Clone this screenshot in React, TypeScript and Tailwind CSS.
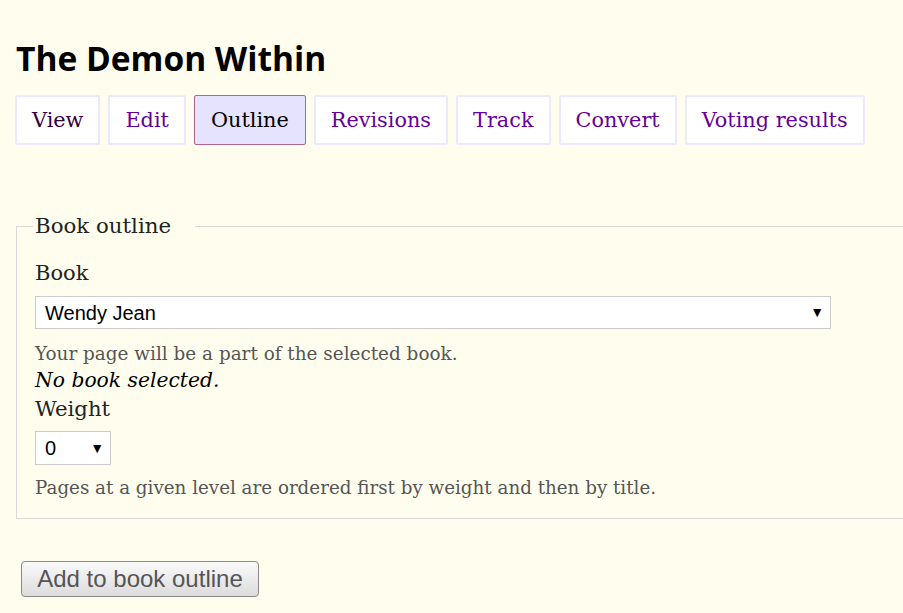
import React from "react";

const serif = { fontFamily: '"DejaVu Serif", Georgia, serif' };

function Tab({ label, active, color }: { label: string; active?: boolean; color: string }) {
  return (
    <a
      className={
        active
          ? "flex h-[50px] items-center rounded-[2px] border border-[#b8628f] bg-[#e6e3ff] px-[16px] pt-[2px] text-[20.8px] text-black"
          : "flex h-[50px] items-center rounded-[2px] border-2 border-[#ebe8ff] bg-white px-[15px] pt-[2px] text-[20.8px]"
      }
      style={active ? undefined : { color }}
    >
      {label}
    </a>
  );
}

export default function App() {
  return (
    <div
      className="h-[613px] w-[903px] overflow-hidden bg-[#fffeee] text-[#222]"
      style={serif}
    >
      <h1
        className="ml-[16px] pt-[38px] text-[33.5px] font-bold leading-[40px] text-black"
        style={{ fontFamily: '"Open Sans", "DejaVu Sans", sans-serif' }}
      >
        The Demon Within
      </h1>
      <div className="ml-[15px] mt-[17px] flex gap-[8px]">
        <Tab label="View" color="#330044" />
        <Tab label="Edit" color="#660099" />
        <Tab label="Outline" active color="#000" />
        <Tab label="Revisions" color="#660099" />
        <Tab label="Track" color="#660099" />
        <Tab label="Convert" color="#660099" />
        <Tab label="Voting results" color="#660099" />
      </div>

      <fieldset className="ml-[16px] mt-[68px] w-[1000px] border border-[#d8d8d8] pb-[17px] pl-[18px] pr-0">
        <legend className="-ml-[2px] pl-[2px] pr-[24px] text-[21.3px] leading-[26px] text-[#222]">
          Book outline
        </legend>
        <div className="mt-[21px] text-[21px] leading-[26px] text-[#222]">Book</div>
        <div
          className="mt-[10px] flex h-[33px] w-[796px] items-center justify-between border border-[#cccccc] bg-white pl-[9px] pr-[6px] text-[20px] text-black"
          style={{ fontFamily: '"Liberation Sans", Arial, sans-serif' }}
        >
          <span>Wendy Jean</span>
          <span className="text-[14px]">▼</span>
        </div>
        <div className="mt-[12px] text-[18.4px] leading-[26px] text-[#555]">
          Your page will be a part of the selected book.
        </div>
        <div className="text-[20.3px] italic leading-[26px] text-black">No book selected.</div>
        <div className="mt-[1px] text-[21.2px] leading-[29px] text-[#222]">Weight</div>
        <div
          className="mt-[8px] flex h-[34px] w-[76px] items-center justify-between border border-[#cccccc] bg-white pl-[9px] pr-[6px] text-[20px] text-black"
          style={{ fontFamily: '"Liberation Sans", Arial, sans-serif' }}
        >
          <span>0</span>
          <span className="text-[14px]">▼</span>
        </div>
        <div className="mt-[10px] text-[18.3px] leading-[26px] text-[#555]">
          Pages at a given level are ordered first by weight and then by title.
        </div>
      </fieldset>

      <button
        className="ml-[21px] mt-[42px] flex h-[36px] w-[238px] items-center justify-center rounded-[4px] border border-[#888] bg-gradient-to-b from-[#fafafa] to-[#dcdcdc] text-[24px] text-[#555]"
        style={{ fontFamily: '"Liberation Sans", Arial, sans-serif' }}
      >
        Add to book outline
      </button>
    </div>
  );
}
